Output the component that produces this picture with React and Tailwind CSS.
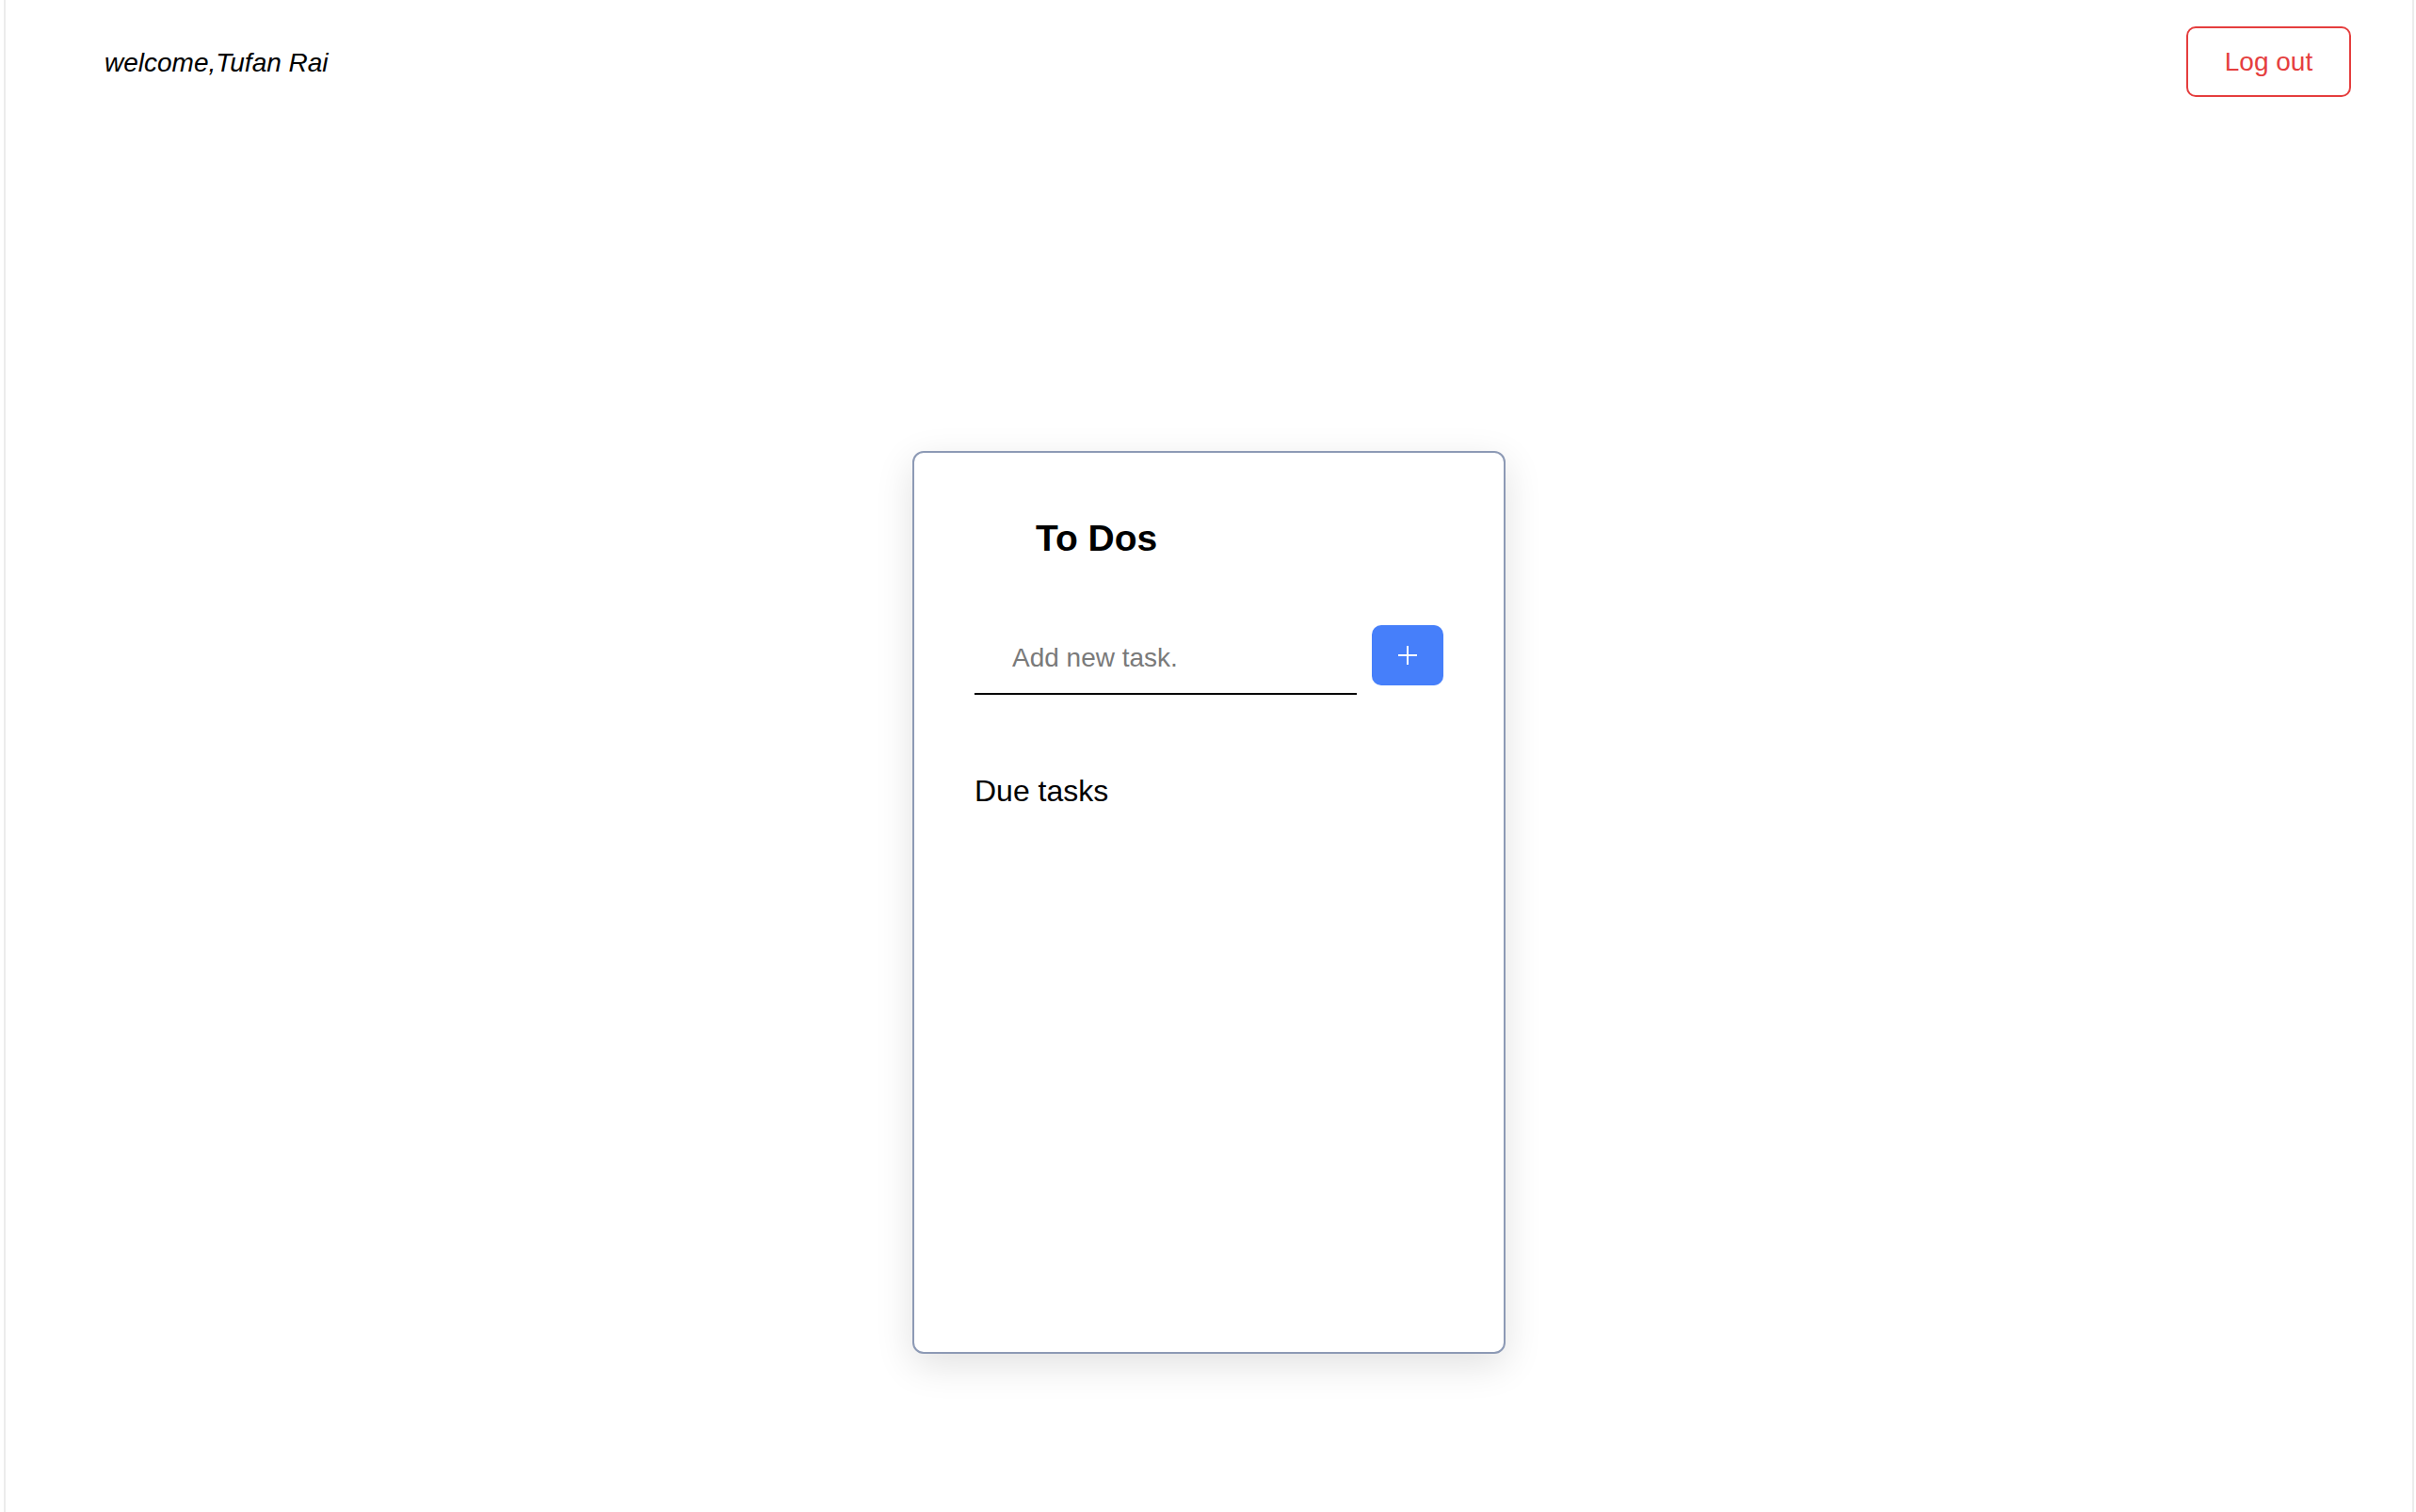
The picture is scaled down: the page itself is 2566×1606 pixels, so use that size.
import { useState } from "react";

export default function App() {
  const [task, setTask] = useState("");
  const [tasks, setTasks] = useState([]);

  const addTask = () => {
    if (!task.trim()) return;
    setTasks([...tasks, task.trim()]);
    setTask("");
  };

  return (
    <div className="min-h-screen bg-white font-['Liberation_Sans',Arial,sans-serif]">
      <div className="ml-[4px] mr-[2px] min-h-screen border-x-2 border-[#ececec]">

        {/* Header */}
        <header className="flex items-center justify-between pl-[105px] pr-[65px] py-[28px]">
          <p className="text-[28px] italic text-black leading-none mt-[2px]">welcome,Tufan Rai</p>
          <button className="w-[175px] h-[75px] rounded-[10px] border-2 border-[#e53e3e] text-[#e53e3e] text-[28px] leading-none">
            Log out
          </button>
        </header>

        {/* Card */}
        <div className="mx-auto mt-[348px] w-[630px] h-[959px] bg-white border-2 border-[#8d9ab5] rounded-[12px] shadow-[0_12px_40px_rgba(0,0,0,0.12)] px-[64px] pt-[71px]">
          <h1 className="pl-[65px] text-[39px] font-bold text-black leading-none">To Dos</h1>

          <div className="mt-[71px] flex items-start gap-[16px]">
            <input
              type="text"
              value={task}
              onChange={(e) => setTask(e.target.value)}
              onKeyDown={(e) => { if (e.key === "Enter") addTask(); }}
              placeholder="Add new task."
              className="w-[406px] h-[76px] pl-[40px] border-b-2 border-black outline-none text-[28px] text-black placeholder:text-[#7a7a7a]"
            />
            <button
              onClick={addTask}
              className="mt-[2px] w-[76px] h-[64px] rounded-[10px] bg-[#467ffa] flex items-center justify-center"
            >
              <svg width="20" height="20" viewBox="0 0 20 20" fill="none" stroke="white" strokeWidth="2">
                <line x1="10" y1="0" x2="10" y2="20" />
                <line x1="0" y1="10" x2="20" y2="10" />
              </svg>
            </button>
          </div>

          <h2 className="mt-[86px] text-[32px] text-black leading-none">Due tasks</h2>

          <ul className="mt-6 space-y-3">
            {tasks.map((t, i) => (
              <li key={i} className="text-[24px] text-black">{t}</li>
            ))}
          </ul>
        </div>

      </div>
    </div>
  );
}
